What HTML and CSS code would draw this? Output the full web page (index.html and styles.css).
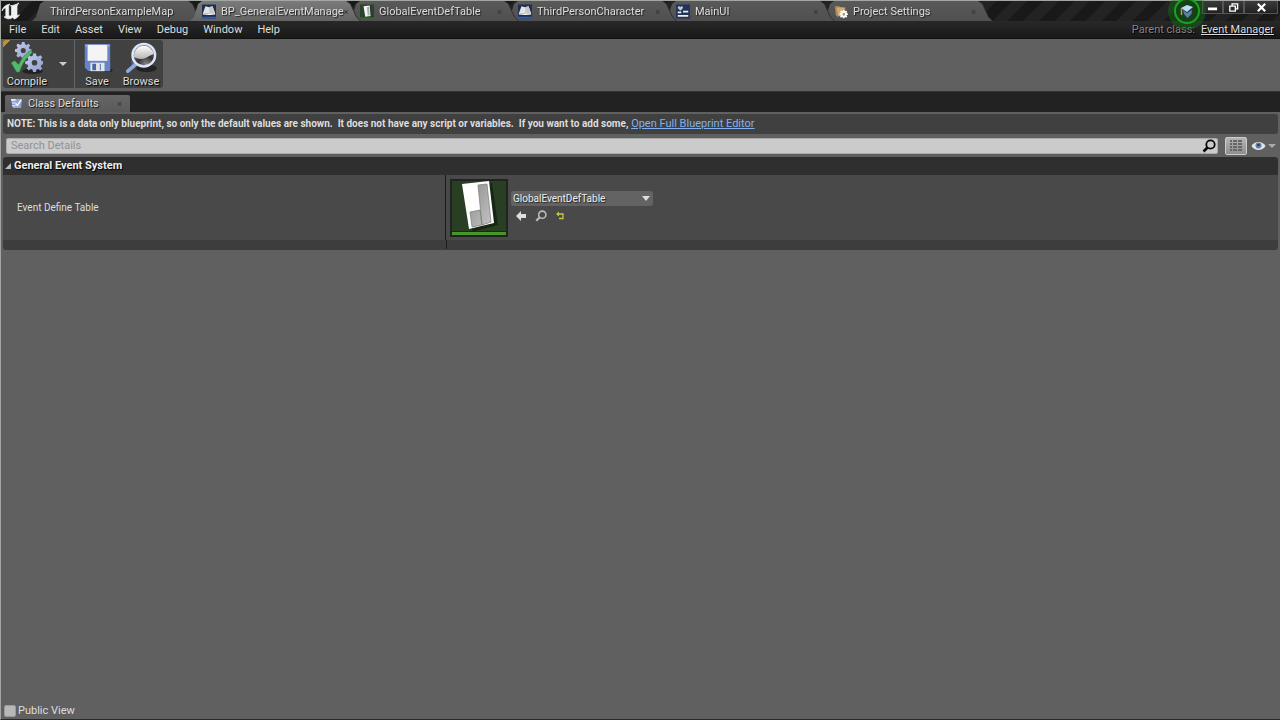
FILE: index.html
```html
<!DOCTYPE html>
<html lang="en">
<head>
  <meta charset="UTF-8">
  <meta name="viewport" content="width=device-width, initial-scale=1.0">
  <title>BP_GeneralEventManager</title>
  <link rel="stylesheet" href="styles.css">
</head>
<body>
  <!-- Shared shapes -->
  <svg class="defs" width="0" height="0" aria-hidden="true">
    <defs>
      <linearGradient id="metal" x1="0" y1="0" x2="1" y2="1">
        <stop offset="0" stop-color="#c5d0f0"/>
        <stop offset="1" stop-color="#8c9acb"/>
      </linearGradient>
      <linearGradient id="column" x1="0" y1="0" x2="1" y2="1">
        <stop offset="0" stop-color="#8f8f8f"/>
        <stop offset="1" stop-color="#c4c4c4"/>
      </linearGradient>
      <radialGradient id="glass" cx="0.6" cy="0.9" r="0.9">
        <stop offset="0" stop-color="#8a8a8a"/>
        <stop offset="0.4" stop-color="#333"/>
        <stop offset="1" stop-color="#777"/>
      </radialGradient>
      <linearGradient id="shine" x1="0" y1="0" x2="0" y2="1">
        <stop offset="0" stop-color="#fff"/>
        <stop offset="1" stop-color="#b5b5b5"/>
      </linearGradient>
      <symbol id="gear" viewBox="0 0 20 20">
        <path fill-rule="evenodd" d="M8.500 0h3l.6 2.800 1.800.7L16.300 2l2 2.100-1.600 2.300.8 1.800 2.500.4v2.900l-2.600.6-.7 1.800 1.500 2.300-2.100 2.100-2.300-1.600-1.800.8-.5 2.500h-3l-.6-2.600-1.700-.7-2.400 1.500L1.800 16l1.500-2.200-.7-1.800L0 11.500v-3l2.700-.5.7-1.800L1.900 3.900 4 1.900l2.200 1.500L8 2.700zM10 7a3 3 0 1 0 0 6 3 3 0 0 0 0-6z"/>
      </symbol>
      <symbol id="blueprint" viewBox="0 0 16 16">
        <path fill="#1e3052" d="M0 0h16v16H0z"/>
        <path fill="#315fae" d="M0 14h16v2H0z"/>
        <path fill="#e4e4e4" d="M4 2l4 1 4-1 3 8-6.500.6L1 10z"/>
        <path fill="#c8c8c8" d="M8 3l4-1 3 8-6.500.6z"/>
        <path fill="#fff" d="M1 10l7.500.6L15 10v1.300l-6.500.8L1 11.300z"/>
      </symbol>
      <symbol id="lens" viewBox="0 0 14 14">
        <circle cx="8.500" cy="5.500" r="4.200" fill="none" stroke="currentColor" stroke-width="1.800"/>
        <path d="M5.500 8.500L1.500 12.500" stroke="currentColor" stroke-width="2.600"/>
      </symbol>
    </defs>
  </svg>

  <header class="titlebar">
    <svg class="logo" viewBox="0 0 20 20" aria-label="Unreal">
      <path fill="#f2f2f2" stroke="#f2f2f2" stroke-width="0.700" d="M1 10C2 6 4.500 4 9 3C7.800 4 7.700 4.700 7.700 6v8c0 1 1.800 1.400 2.800.3V6.200c0-1-.5-1.400-1.200-1.600C12 4.500 14.500 4 18 2c-1.500 1.500-2 2.500-2 4v7.500c0 1 .8 1.300 2.500.2-1.500 2.600-3.500 3.600-5 4.300L11.500 16.500C9.500 18.300 6 18.500 3 15.800c1 .1 1.800-.3 1.800-1.300V8c0-1.600-2-1.200-3.800 2z"/>
    </svg>
    <nav class="tabs">
      <a class="tab first" href="#"><span>ThirdPersonExampleMap</span></a>
      <a class="tab active" href="#">
        <svg class="tab-icon"><use href="#blueprint"/></svg>
        <span>BP_GeneralEventManage</span><i class="close">×</i>
      </a>
      <a class="tab" href="#">
        <svg class="tab-icon" viewBox="0 0 16 16">
          <path fill="#29442a" d="M0 0h16v16H0z"/>
          <path fill="#3f7d2c" d="M0 15h16v1H0z"/>
          <path fill="#f4f4f4" d="M4 2l7-1 1 12-6 1z"/>
          <path fill="#aaa" d="M8 3l2.300-.3.8 9.500-2.300.5z"/>
        </svg>
        <span>GlobalEventDefTable</span><i class="close">×</i>
      </a>
      <a class="tab" href="#">
        <svg class="tab-icon"><use href="#blueprint"/></svg>
        <span>ThirdPersonCharacter</span><i class="close">×</i>
      </a>
      <a class="tab" href="#">
        <svg class="tab-icon" viewBox="0 0 16 16">
          <path fill="#20345c" d="M0 0h16v16H0z"/>
          <path fill="#ccc" d="M5 7L2 4c0-2 2-2.500 3-1 1-1.500 3-1 3 1z"/>
          <path fill="#eee" d="M2 8h4v2H2zM8 7h6v2H8zM2 12h12v2H2z"/>
        </svg>
        <span>MainUI</span><i class="close">×</i>
      </a>
      <a class="tab" href="#">
        <svg class="tab-icon" viewBox="0 0 16 16">
          <path fill="#b38b58" d="M1 2h5l1 1h6v8L4 14 2 12z"/>
          <path fill="#d0aa74" d="M3 4l4-1 5 1-1 8-6 1z"/>
          <use href="#gear" x="6" y="6" width="10" height="10" fill="#fff"/>
        </svg>
        <span>Project Settings</span><i class="close">×</i>
      </a>
    </nav>
    <div class="window-buttons">
      <button aria-label="Minimize"><svg viewBox="0 0 12 12"><path fill="#fff" d="M1 6h10v3H1z"/></svg></button>
      <button aria-label="Restore"><svg viewBox="0 0 12 12"><path fill="none" stroke="#fff" stroke-width="1.500" d="M4.500 4V2h6v5.500H8.500M2 4.500h6v5.500H2z"/></svg></button>
      <button class="wide" aria-label="Close"><svg viewBox="0 0 12 12"><path stroke="#fff" stroke-width="2.400" d="M2 2l8 8M10 2l-8 8"/></svg></button>
    </div>
    <button class="tutorial" aria-label="Tutorials">
      <svg viewBox="0 0 16 16">
        <path fill="#607dac" d="M4 7l4 3 5-3-.5 4L8.500 15 5 11z"/>
        <path fill="#b9dcf7" d="M2 5l6-3 6 2-6 5z"/>
        <path fill="none" stroke="#b59a61" stroke-width="1.500" d="M2.500 5v7"/>
      </svg>
    </button>
  </header>

  <div class="menubar">
    <nav class="menus">
      <button>File</button>
      <button>Edit</button>
      <button>Asset</button>
      <button>View</button>
      <button>Debug</button>
      <button>Window</button>
      <button>Help</button>
    </nav>
    <div class="parent-class"><span>Parent class:</span> <a href="#">Event Manager</a></div>
  </div>

  <div class="toolbar">
    <div class="tool-group">
      <button class="tool compile">
        <svg viewBox="0 0 34 34">
          <ellipse cx="23" cy="31" rx="11" ry="3" fill="#222"/>
          <use href="#gear" x="4" y="0" width="18" height="18" fill="url(#metal)"/>
          <use href="#gear" x="15" y="12" width="20" height="20" fill="url(#metal)"/>
          <path fill="#54b96b" stroke="#317c43" stroke-width="0.600" d="M0 22l4-2 4 4C11 18 15 13 21 9l2 2c-7 6-11 12-14 21H6z"/>
        </svg>
        <span>Compile</span>
      </button>
      <button class="tool-menu" aria-label="Compile options"><i class="arrow"></i></button>
      <button class="tool save">
        <svg viewBox="0 0 34 34">
          <path fill="#222" d="M8 29h26l-2 3H8z"/>
          <path fill="#6684c8" d="M4 2h27v29H8l-4-4z"/>
          <path fill="#f4f4f4" d="M7 3h21v17H7z"/>
          <path fill="#b9c8e9" d="M5 3h1v2H5zM29 3h1v2h-1z"/>
          <path fill="#e5e5e5" d="M10 22h15v9H10z"/>
          <path fill="#4866a8" d="M12 23h4v7h-4zM20 23h1v7h-1z"/>
        </svg>
        <span>Save</span>
      </button>
      <button class="tool browse">
        <svg viewBox="0 0 34 34">
          <ellipse cx="23" cy="28" rx="11" ry="4" fill="#222"/>
          <path fill="#4f6592" d="M7 8h6v17H7z"/>
          <path stroke="#8da8dd" stroke-width="4" stroke-linecap="round" d="M11 24l-8 7"/>
          <circle cx="20" cy="14" r="12" fill="url(#glass)" stroke="#dce5fa" stroke-width="2.500"/>
          <path fill="url(#shine)" d="M9.500 16a10.500 10.500 0 1 1 21-3c-6 1-7 5-13 5-4 0-6-1-8-2z"/>
        </svg>
        <span>Browse</span>
      </button>
    </div>
  </div>

  <div class="panel-tabs">
    <a class="panel-tab" href="#">
      <svg viewBox="0 0 14 12">
        <path fill="#8fa3d6" d="M1 1h12l-1 10H3z"/>
        <path fill="#e9eefb" d="M1 1h5v2H1zM2 5h4v1H2zM2 8h4v1H2z"/>
        <path fill="none" stroke="#fff" stroke-width="1.500" d="M6 6l2 2 4-6"/>
      </svg>
      <span>Class Defaults</span><i class="close">×</i>
    </a>
  </div>

  <main class="details">
    <p class="note"><b>NOTE: This is a data only blueprint, so only the default values are shown.&nbsp; It does not have any script or variables.&nbsp; If you want to add some,</b> <a href="#">Open Full Blueprint Editor</a></p>

    <div class="filter">
      <label class="search">
        <input type="text" placeholder="Search Details" aria-label="Search Details">
        <svg><use href="#lens"/></svg>
      </label>
      <button class="matrix" aria-label="Property matrix">
        <svg viewBox="0 0 12 12">
          <path fill="#666" d="M0 0h2v2H0zM3 0h4v2H3zM8 0h4v2H8zM0 3h2v2H0zM3 3h4v2H3zM8 3h4v2H8zM0 6h2v2H0zM3 6h4v2H3zM8 6h4v2H8zM0 9h2v2H0zM3 9h4v2H3zM8 9h4v2H8z"/>
        </svg>
      </button>
      <button class="view-options" aria-label="View options">
        <svg viewBox="0 0 14 10">
          <path fill="#e1e4e8" d="M0 5C3-.3 11-.3 14 5 11 10.300 3 10.300 0 5z"/>
          <circle cx="7" cy="4.500" r="3" fill="#6580a5"/>
          <circle cx="7" cy="4" r="1.200" fill="#273550"/>
        </svg>
        <i class="arrow"></i>
      </button>
    </div>

    <section class="category">
      <h2><i class="expander"></i>General Event System</h2>
      <div class="property">
        <label class="name" for="event-table">Event Define Table</label>
        <div class="value">
          <svg class="thumb" viewBox="0 0 58 58">
            <path fill="#202320" d="M0 0h58v58H0z"/>
            <path fill="#293f24" d="M2 2h54v50H2z"/>
            <path fill="#479629" d="M2 53h54v3H2z"/>
            <path fill="#172714" d="M15 8l27-4 6 42-26 7z"/>
            <path fill="#fff" d="M12 5l27-3 5 42-25 6z"/>
            <path fill="url(#column)" stroke="#777" stroke-width="0.700" d="M28 6l9-1 4 38-9 3zM20 33l10-2 2 15-10 2z"/>
          </svg>
          <div class="picker">
            <select id="event-table">
              <option>GlobalEventDefTable</option>
            </select>
            <div class="actions">
              <button aria-label="Use selected asset"><svg viewBox="0 0 12 12"><path fill="#ddd" d="M1 6l5-5v3h5v4H6v3z"/></svg></button>
              <button class="find" aria-label="Find in content browser"><svg viewBox="0 0 12 12"><use href="#lens" width="12" height="12"/></svg></button>
              <button aria-label="Reset to default"><svg viewBox="0 0 12 12"><path fill="none" stroke="#c6c83c" stroke-width="1.300" d="M3 4h5v4.500H4"/><path fill="#c6c83c" d="M1 4l3-2.500v5z"/></svg></button>
            </div>
          </div>
        </div>
      </div>
      <div class="category-end"></div>
    </section>
  </main>

  <footer class="footer">
    <label><input type="checkbox">Public View</label>
  </footer>
</body>
</html>
```

FILE: styles.css
```css
* {
  box-sizing: border-box;
}

body {
  margin: 0;
  min-height: 100vh;
  display: flex;
  flex-direction: column;
  font-family: Roboto, "Liberation Sans", sans-serif;
  font-size: 11px;
  line-height: 16px;
  color: #ddd;
  background: #606060;
  border-left: 1px solid #a0a5a1;
  border-bottom: 1px solid #292929;
}

button {
  padding: 0;
  border: none;
  background: none;
  font: inherit;
  color: inherit;
}

svg {
  display: block;
  flex-shrink: 0;
}

a {
  color: inherit;
}

.defs {
  position: absolute;
}

/* Title bar */
.titlebar {
  position: relative;
  display: flex;
  height: 21px;
  border-top: 1px solid #a0a8a1;
  background: repeating-linear-gradient(135deg, #191919 0, #191919 11px, #232323 11px, #232323 22px);
}

.logo {
  width: 20px;
  height: 20px;
}

.tabs {
  display: flex;
  flex: 1;
  padding-left: 11px;
}

.tab {
  position: relative;
  display: flex;
  align-items: center;
  width: 170px;
  margin-right: -12px;
  padding: 1px 16px 0 12px;
  text-decoration: none;
  text-shadow: 1px 1px 1px #222;
  filter: drop-shadow(1px 0 0 #303030);
}

.tab::before {
  content: '';
  position: absolute;
  inset: 0;
  z-index: -1;
  background: linear-gradient(#595959, #505050);
  clip-path: polygon(0 100%, 4px 80%, 8px 15%, 12px 0, 156px 0, 160px 15%, 166px 80%, 170px 100%);
}

.tab.active::before {
  background: linear-gradient(#7a7a7a, #646464);
}

.tab:nth-child(2) { z-index: 6; }
.tab:nth-child(3) { z-index: 5; }
.tab:nth-child(4) { z-index: 4; }
.tab:nth-child(5) { z-index: 3; }
.tab:nth-child(6) { z-index: 2; }

.tab.first {
  padding-left: 18px;
}

.tab-icon {
  width: 14px;
  height: 15px;
  margin-right: 5px;
}

.close {
  margin-left: auto;
  font-size: 9px;
  font-style: normal;
  color: #333;
  text-shadow: none;
}

.window-buttons {
  display: flex;
  height: 13px;
  margin-right: 2px;
}

.window-buttons button {
  display: flex;
  align-items: center;
  justify-content: center;
  width: 21px;
  border: 1px solid #555;
  border-top: none;
  background: linear-gradient(#3a3a3a, #222);
}

.window-buttons .wide {
  width: 34px;
}

.window-buttons svg {
  width: 11px;
  height: 11px;
}

.tutorial {
  position: absolute;
  right: 80px;
  top: -3px;
  z-index: 8;
  display: flex;
  align-items: center;
  justify-content: center;
  width: 26px;
  height: 26px;
  border: 2px solid #16a51c;
  border-radius: 50%;
  background: #173f18;
  box-shadow: 0 0 0 6px rgba(20, 120, 20, 0.4);
}

.tutorial svg {
  width: 16px;
  height: 16px;
}

/* Menu bar */
.menubar {
  display: flex;
  justify-content: space-between;
  height: 18px;
  padding: 1px 6px 0 8px;
  background: linear-gradient(#282828, #191919);
  border-bottom: 1px solid #111;
  text-shadow: 1px 1px 0 #000;
}

.menus {
  display: flex;
  gap: 15px;
}

.parent-class {
  display: flex;
  gap: 6px;
}

.parent-class span {
  color: #858585;
}

/* Toolbar */
.toolbar {
  height: 52px;
  padding: 1px 2px;
}

.tool-group {
  display: flex;
  width: max-content;
  height: 48px;
  border-radius: 3px;
  background: linear-gradient(135deg, #c1902a 5px, #414141 5px);
}

.tool {
  display: flex;
  flex-direction: column;
  align-items: center;
  width: 44px;
  padding-top: 2px;
  text-shadow: 1px 1px 1px #000;
}

.tool svg {
  width: 32px;
  height: 32px;
}

.tool.compile {
  width: 48px;
}

.tool-menu {
  width: 24px;
  display: flex;
  align-items: center;
  justify-content: center;
  border-right: 1px solid #666;
}

.arrow {
  border: 4px solid transparent;
  border-top-color: #ccc;
  border-bottom: none;
}

/* Panel tabs */
.panel-tabs {
  height: 21px;
  padding: 3px 4px 0;
  background: #222;
  border-top: 1px solid #333;
}

.panel-tab {
  display: flex;
  align-items: center;
  width: 125px;
  height: 17px;
  padding: 0 8px 0 5px;
  gap: 5px;
  border-radius: 2px 2px 0 0;
  background: linear-gradient(#666, #5a5a5a);
  text-decoration: none;
  text-shadow: 1px 1px 1px #111;
}

.panel-tab svg {
  width: 13px;
  height: 11px;
}

/* Details */
.details {
  flex: 1;
  padding: 2px;
}

.note {
  margin: 0;
  height: 20px;
  padding: 2px 4px;
  border-radius: 3px;
  background: #404040;
  white-space: nowrap;
  overflow: hidden;
}

.note b {
  font-size: 10px;
}

.note a {
  color: #82b1ed;
}

.filter {
  display: flex;
  align-items: center;
  height: 23px;
  padding: 0 2px 0 3px;
}

.search {
  display: flex;
  align-items: center;
  flex: 1;
  height: 16px;
  padding: 0 1px 0 4px;
  border: 1px solid #aaa;
  border-radius: 2px;
  background: #cbcbcb;
  color: #080808;
}

.search input {
  flex: 1;
  min-width: 0;
  height: 14px;
  padding: 0;
  border: none;
  outline: none;
  background: none;
  font: inherit;
}

.search input::placeholder {
  color: #929292;
}

.search svg {
  width: 14px;
  height: 14px;
}

.matrix {
  display: flex;
  align-items: center;
  justify-content: center;
  width: 22px;
  height: 18px;
  margin-left: 7px;
  border: 1px solid #ccc;
  border-radius: 2px;
  background: linear-gradient(#b4b4b4, #8f8f8f);
}

.matrix svg {
  width: 12px;
  height: 12px;
}

.view-options {
  display: flex;
  align-items: center;
  gap: 2px;
  margin-left: 4px;
}

.view-options svg {
  width: 15px;
  height: 10px;
}

.view-options .arrow {
  border-top-color: #aaa;
}

.category {
  border-radius: 3px;
  overflow: hidden;
}

.category h2 {
  display: flex;
  align-items: center;
  gap: 3px;
  height: 18px;
  margin: 0;
  padding-left: 2px;
  background: #2f2f2f;
  font-size: 11px;
  text-shadow: 1px 1px 1px #000;
  color: #eee;
}

.expander {
  border-left: 6px solid transparent;
  border-bottom: 6px solid #bbb;
}

.property {
  display: flex;
  height: 65px;
  background: #494949;
}

.name {
  display: flex;
  align-items: center;
  width: 443px;
  padding-left: 14px;
  border-right: 1px solid #1c1c1c;
  font-size: 10px;
}

.value {
  display: flex;
  align-items: center;
  gap: 3px;
  padding-left: 4px;
}

.thumb {
  width: 58px;
  height: 58px;
}

.picker {
  display: flex;
  flex-direction: column;
  gap: 4px;
  padding-bottom: 2px;
}

.picker select {
  appearance: none;
  width: 142px;
  height: 15px;
  padding: 0 2px;
  border: none;
  border-radius: 3px;
  background: url("data:image/svg+xml,%3Csvg xmlns='http://www.w3.org/2000/svg' width='8' height='5'%3E%3Cpath fill='%23ddd' d='M0 0h8L4 5z'/%3E%3C/svg%3E") right 3px center no-repeat #636363;
  font: inherit;
  font-size: 10px;
  line-height: 15px;
  color: #eee;
  text-shadow: 1px 1px 1px #222;
}

.actions {
  display: flex;
  gap: 8px;
  padding-left: 4px;
}

.actions svg {
  width: 12px;
  height: 12px;
}

.actions .find {
  color: #bbb;
}

.category-end {
  height: 10px;
  background: #3d3d3d;
}

.category-end::before {
  content: '';
  display: block;
  width: 443px;
  height: 9px;
  border-right: 1px solid #1c1c1c;
}

/* Footer */
.footer {
  display: flex;
  padding: 0 3px;
}

.footer label {
  display: flex;
  align-items: center;
  gap: 2px;
}

.footer input {
  appearance: none;
  width: 12px;
  height: 12px;
  margin: 0;
  border: 1px solid #999;
  border-radius: 2px;
  background: #b8b8b8;
}
```
